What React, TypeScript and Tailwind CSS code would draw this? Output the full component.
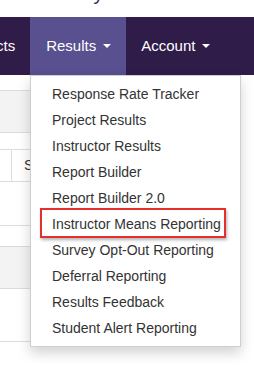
import React from 'react';

const items = [
  'Response Rate Tracker',
  'Project Results',
  'Instructor Results',
  'Report Builder',
  'Report Builder 2.0',
  'Instructor Means Reporting',
  'Survey Opt-Out Reporting',
  'Deferral Reporting',
  'Results Feedback',
  'Student Alert Reporting',
];

function Caret() {
  return (
    <span className="ml-[7px] inline-block h-0 w-0 border-x-[4px] border-t-[4px] border-x-transparent border-t-white align-middle" />
  );
}

export default function App() {
  return (
    <div className="relative h-[366px] w-[254px] overflow-hidden bg-white font-['Liberation_Sans',Arial,sans-serif] text-[#333]">
      {/* page title, mostly scrolled off the top */}
      <div className="flex h-[17px] flex-col justify-end overflow-hidden">
        <div className="-ml-[103px] h-[48px] shrink-0 whitespace-nowrap text-[20px] leading-[48px] text-[#3b2d55]">
          Welcome to the Survey Portal
        </div>
      </div>

      {/* nav bar */}
      <nav className="flex h-[58px] items-stretch bg-[#2f1c48] text-[15px] text-white">
        <div className="-ml-[54px] flex items-stretch">
          <a className="flex items-center px-[15px]">Projects</a>
          <a className="flex items-center bg-[#58508f] pl-[16px] pr-[15px]">
            Results
            <Caret />
          </a>
          <a className="flex items-center px-[15px]">
            Account
            <Caret />
          </a>
        </div>
      </nav>

      {/* page content under the menu */}
      <div className="w-[225px]">
        <div className="h-[16px] border-b border-[#dcdcdc]" />
        <div className="h-[42px] border-b border-[#dcdcdc] bg-[#f3f3f3]" />
        <div className="h-[17px] border-b border-[#dcdcdc]" />
        <div className="flex h-[32px] border-b border-[#dcdcdc] text-[14px]">
          <div className="w-[12px] border-r border-[#dcdcdc]" />
          <div className="flex w-[18px] items-center overflow-hidden pl-[12px]">Survey</div>
        </div>
        <div className="h-[44px] border-b border-[#dcdcdc]" />
        <div className="h-[21px] border-b border-[#dcdcdc]" />
        <div className="h-[42px] border-b border-[#dcdcdc] bg-[#f3f3f3]" />
        <div className="h-[53px] border-b border-[#dcdcdc]" />
      </div>

      {/* open dropdown */}
      <ul className="absolute left-[30px] top-[75px] w-[211px] border border-[#cfcfcf] bg-white py-[5px] text-[14px] leading-[20px] shadow-[0_6px_12px_rgba(0,0,0,0.175)]">
        {items.map((item) => (
          <li key={item} className="whitespace-nowrap px-[21px] py-[3px] text-[#333]">
            {item}
          </li>
        ))}
        <div className="absolute left-[9px] top-[132px] h-[30px] w-[186px] border-2 border-[#e3302f] shadow-[1px_2px_3px_rgba(0,0,0,0.3)]" />
      </ul>
    </div>
  );
}
